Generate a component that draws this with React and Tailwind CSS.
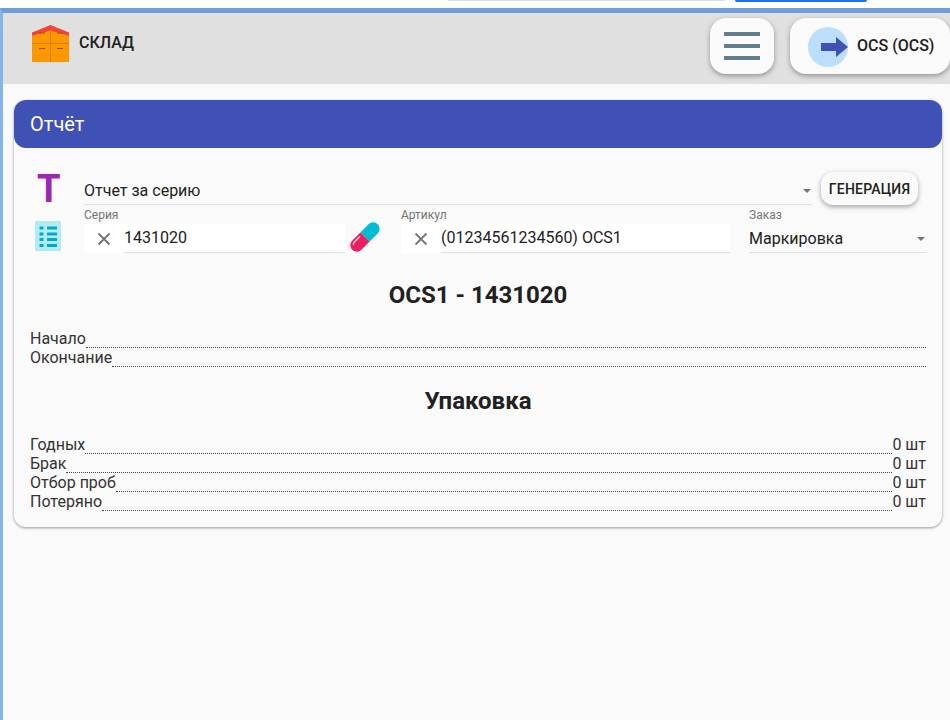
import React from 'react';

const font = { fontFamily: 'Roboto, sans-serif' };

function WarehouseIcon() {
  return (
    <svg width="37" height="37" viewBox="0 0 37 37" className="block">
      <path d="M0 11 L18.5 5 L37 11 V37 H0 Z" fill="#ff9800" />
      <path d="M0 7.500 L18.500 0 L37 7.500 V11 L18.500 5.500 L0 11 Z" fill="#f44336" />
      <path d="M18 5.500h1V37h-1z M0 18h37v1H0z" fill="#d98200" />
      <path d="M7 23h6v1H7z M25 23h6v1h-6z M7 7.500h6v1H7z M25 7.500h6v1h-6z" fill="#8d5a00" />
    </svg>
  );
}

function MenuButton() {
  return (
    <button className="w-16 h-14 rounded-2xl bg-[#fafafa] shadow-[0_2px_5px_rgba(0,0,0,0.35)] flex flex-col items-center justify-center gap-2">
      <span className="block w-9 h-1 bg-[#607d8b]" />
      <span className="block w-9 h-1 bg-[#607d8b]" />
      <span className="block w-9 h-1 bg-[#607d8b]" />
    </button>
  );
}

function ArrowCircle() {
  return (
    <div className="w-10 h-10 mt-[2px] rounded-full bg-[#bbdefb]">
      <svg width="40" height="40" viewBox="0 0 40 40" className="block">
        <path d="M13 16h15v-6l12 10-12 10v-6H13z" fill="#3f51b5" />
      </svg>
    </div>
  );
}

function PillIcon() {
  return (
    <svg width="32" height="32" viewBox="0 0 32 32" className="block">
      <g transform="rotate(45 16 16)">
        <path d="M9.500 16 V4.500 a6.500 6.500 0 0 1 13 0 V16 Z" fill="#00bcd4" />
        <path d="M9.500 16 H22.500 V27.500 a6.500 6.500 0 0 1 -13 0 Z" fill="#e91e63" />
        <path d="M12 19 v8 a4 4 0 0 0 1.500 3" stroke="#f8bbd0" strokeWidth="1.500" fill="none" />
      </g>
    </svg>
  );
}

function ListIcon() {
  return (
    <svg width="26" height="30" viewBox="0 0 26 30" className="block">
      <rect width="26" height="30" fill="#b2ebf2" />
      <path d="M4.500 5.500h4v3h-4z M4.500 11.500h4v3h-4z M4.500 17h4v3h-4z M4.500 23h4v3h-4z M12 5.500h10v3H12z M12 11.500h10v3H12z M12 17h10v3H12z M12 23h10v3H12z" fill="#00acc1" />
    </svg>
  );
}

function CloseIcon() {
  return (
    <svg width="14" height="14" viewBox="0 0 14 14" className="block">
      <path d="M1.500 1.500l11 11M12.500 1.500l-11 11" stroke="#757575" strokeWidth="1.800" fill="none" />
    </svg>
  );
}

function Caret() {
  return <span className="block w-0 h-0 border-x-4 border-x-transparent border-t-4 border-t-[#757575]" />;
}

function ClearField({ label, value, widthClass }) {
  return (
    <div className={widthClass}>
      <div className="text-xs leading-[13px] text-[#757575]">{label}</div>
      <div className="flex h-[29px] mt-[2px] bg-white">
        <div className="w-10 shrink-0 flex items-center justify-center"><CloseIcon /></div>
        <div className="flex-1 border-b border-[#e0e0e0] text-base leading-[27px] text-[#212121]">{value}</div>
      </div>
    </div>
  );
}

function DotRow({ label, value }) {
  return (
    <div className="flex h-[19px] items-end text-base leading-[19px] text-[#333333]">
      <span>{label}</span>
      <span className="flex-1 border-b border-dotted border-[#444444]" />
      {value && <span>{value}</span>}
    </div>
  );
}

export default function App() {
  return (
    <div className="min-h-[720px] bg-white flex flex-col" style={font}>
      <div className="relative h-2 bg-white">
        <div className="absolute left-[448px] top-0 w-[277px] h-[1px] bg-[#dddddd]" />
        <div className="absolute left-[735px] top-0 w-[132px] h-[2px] bg-[#1a73e8] rounded-b" />
      </div>
      <div className="flex-1 flex flex-col border-t-[5px] border-l-[3px] border-t-[#6f9fd8] border-l-[#85b4ec] bg-[#fafafa]">
        <header className="h-[71px] bg-[#e0e0e0] flex justify-between">
          <div className="flex items-start gap-[10px] pl-[29px] pt-[12px]">
            <WarehouseIcon />
            <span className="text-base leading-[36px] font-medium text-[#212121]">СКЛАД</span>
          </div>
          <div className="flex items-start gap-4 pt-[5px]">
            <MenuButton />
            <button className="w-40 h-14 rounded-2xl bg-[#fafafa] shadow-[0_2px_5px_rgba(0,0,0,0.35)] flex items-center gap-[9px] pl-[18px]">
              <ArrowCircle />
              <span className="text-base font-medium text-[#212121]">OCS (OCS)</span>
            </button>
          </div>
        </header>

        <main className="pt-4 pl-[11px] pr-2">
          <div className="rounded-xl bg-[#fafafa] shadow-[0_1px_3px_rgba(0,0,0,0.4)]">
            <div className="h-12 rounded-xl bg-[#3f51b5] px-4 flex items-center text-xl text-white">Отчёт</div>

            <div className="px-4 pb-4">
              <div className="flex pt-[20px]">
                <div className="w-[54px] shrink-0 flex flex-col items-start">
                  <span className="block h-[45px] text-[38px] leading-[42px] font-bold text-[#9c27b0] pl-[7px]">T</span>
                  <div className="pt-[8px] pl-[5px]"><ListIcon /></div>
                </div>

                <div className="flex-1">
                  <div className="flex items-start h-[37px]">
                    <div className="flex-1 flex h-[37px] items-center justify-between border-b border-[#e0e0e0] text-base text-[#212121] pt-[10px] pr-[1px]">
                      <span>Отчет за серию</span>
                      <Caret />
                    </div>
                    <button className="mt-[4px] ml-[9px] mr-2 h-[33px] w-[97px] rounded-xl bg-[#fafafa] text-sm tracking-[0.2px] font-medium text-[#212121] shadow-[0_2px_5px_rgba(0,0,0,0.35)]">ГЕНЕРАЦИЯ</button>
                  </div>

                  <div className="flex items-start pt-[4px]">
                    <ClearField label="Серия" value="1431020" widthClass="w-[261px]" />
                    <div className="w-[56px] shrink-0 pl-[4px] pt-[12px]"><PillIcon /></div>
                    <ClearField label="Артикул" value="(01234561234560) OCS1" widthClass="w-[329px]" />
                    <div className="flex-1 ml-[19px]">
                      <div className="text-xs leading-[13px] text-[#757575]">Заказ</div>
                      <div className="flex h-[29px] mt-[2px] items-center justify-between border-b border-[#e0e0e0] text-base text-[#212121] pt-[2px]">
                        <span>Маркировка</span>
                        <span className="pr-[1px]"><Caret /></span>
                      </div>
                    </div>
                  </div>
                </div>
              </div>

              <h2 className="mt-[27px] text-center text-2xl leading-[30px] font-bold text-[#212121]">OCS1 - 1431020</h2>
              <div className="mt-[19px]">
                <DotRow label="Начало" />
                <DotRow label="Окончание" />
              </div>

              <h2 className="mt-[19px] text-center text-2xl leading-[30px] font-bold text-[#212121]">Упаковка</h2>
              <div className="mt-[19px]">
                <DotRow label="Годных" value="0 шт" />
                <DotRow label="Брак" value="0 шт" />
                <DotRow label="Отбор проб" value="0 шт" />
                <DotRow label="Потеряно" value="0 шт" />
              </div>
            </div>
          </div>
        </main>
      </div>
    </div>
  );
}
